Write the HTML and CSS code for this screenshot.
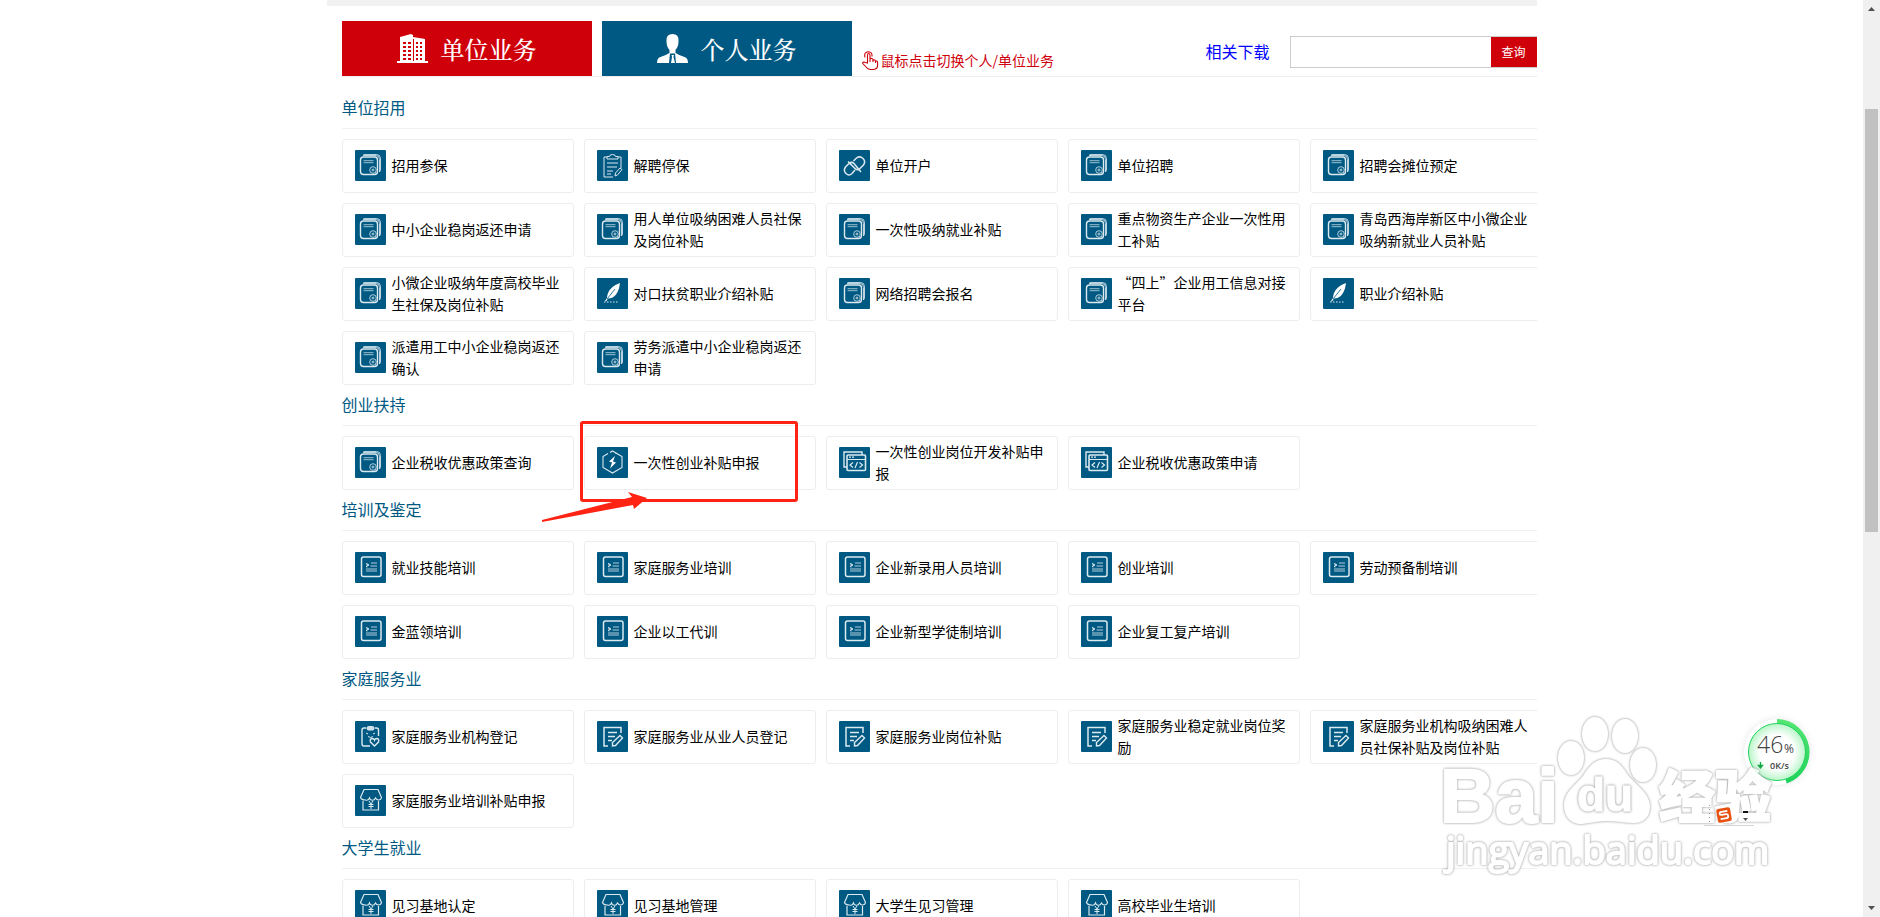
FILE: index.html
```html
<!DOCTYPE html>
<html lang="zh-CN">
<head>
<meta charset="utf-8">
<title>单位业务</title>
<link rel="stylesheet" href="styles.css">
</head>
<body>
<svg class="sprite" aria-hidden="true">
  <symbol id="i-book" viewBox="0 0 31 31"><rect x="5.500" y="7" width="17" height="17.500" rx="3" stroke-width="1.400"/><path d="M8 5.500h13q3.500 0 3.500 4V22M8.500 4.500h13q4 0 4 4V20l-1 2" opacity=".85"/><path d="M8.500 10.700h10M8.500 12.700h10" opacity=".7"/><circle cx="18" cy="20" r="3.300" opacity=".8"/><circle cx="18" cy="20" r="1" opacity=".8"/><path d="M20 22.500l2 1.500" opacity=".7"/></symbol>
  <symbol id="i-clip" viewBox="0 0 31 31"><path d="M10 7H7v20h9M21 7h3v11M10 9V6.500h2.500q0-2 3-2t3 2H21V9z"/><path d="M10 13h11M10 17h10M10 21h6M18 26l.5-3 4.500-5 2 1.500-4.500 5.500zM10 24h4"/></symbol>
  <symbol id="i-link" viewBox="0 0 31 31"><path d="M14.500 11 17.500 8q3.500-2.500 6.500.5t.5 6.500l-4 4q-2.500 2-5-1L9 11.500M16 20l-3 3.500q-3 3-6 0t-.5-6.500l4-4q2.500-1.500 4.500.5l7 8.500" stroke-width="1.500"/></symbol>
  <symbol id="i-quill" viewBox="0 0 31 31"><path d="M23 5q-9 3-12 10-1 3-1 5l-2 3 1 .5 2-3q5 0 8-4 2-3 3-6z" fill="#fff" stroke="none"/><path d="M10 21l8-10" stroke="#005983" stroke-width=".8"/><path d="M7 24h14" stroke-dasharray="1.500 1.500"/></symbol>
  <symbol id="i-bolt" viewBox="0 0 31 31"><path d="M13 5.400 15.500 4 25 9.500v11L15.500 26 6 20.500v-11L11 6.500M19 7v-1" stroke-width="1.100"/><path d="M18 9l-6 5.500 3 1-2 6 6-6-3-1z" fill="#fff" stroke="none"/></symbol>
  <symbol id="i-code" viewBox="0 0 31 31"><path d="M8 20H5V5h18v3" stroke-width="1.400"/><rect x="8" y="8" width="18.500" height="15.500" rx="1" stroke-width="1.600"/><path d="M8 12.500h18.500M10 10.200h2M13 10.200h2M14 15.500l-3 2.500 3 2.500M20.500 15.500l3 2.500-3 2.500M18.500 15l-2.500 6" stroke-width="1.200"/></symbol>
  <symbol id="i-list" viewBox="0 0 31 31"><rect x="6.500" y="5" width="19.500" height="19.500" rx="2" stroke-width="1.500"/><path d="M16 11h6M15.500 14h6.500M11 17h11M11 19h11M12 11v4.500M11 11l3 3M14 12l-3 3" opacity=".8"/></symbol>
  <symbol id="i-heart" viewBox="0 0 31 31"><path d="M11 7H9q-2 0-2 2v14q0 2 2 2h6M20 7h1.500q2 0 2 2v6" stroke-width="1.400"/><rect x="12" y="5.500" width="7" height="3.500" rx="1.500" fill="#cfe0e8"/><path d="M11 12l2 1M20 12l-2 1M13 15.500q2.500 2 5 0"/><path d="M19.500 25l-4-4q-1-3 1.500-3.500 2 0 2.500 1.500.5-1.500 2.500-1.500 2.500.5 1.500 3.500z" stroke-width="1.400"/></symbol>
  <symbol id="i-edit" viewBox="0 0 31 31"><path d="M11 25H7V6.500h17V12" stroke-width="1.500"/><path d="M11 11.500h9M11 15.500h7M11 19.500h4" stroke-width="1.400"/><path d="M15.500 25v-3.500l7.500-7 2.500 2.500-7 7.500z" stroke-width="1.400"/></symbol>
  <symbol id="i-shop" viewBox="0 0 31 31"><path d="M9 4.500h14l3.500 8q-.5 2.500-3 2.500-2 0-3-2-1.500 3-4 2-1.500 0-2-2-1.500 3-4 2-4 0-5-2.500zM8 16v9h15.500v-9" stroke-width="1.200"/><path d="M14 16l2 3 2-3M13.500 19.500h5M13.500 21.500h5M16 19v5"/></symbol>
</svg>

<div class="page">
  <main class="wrap">
    <div class="topline"></div>
    <header class="bar">
      <nav class="tabs">
        <button class="tab tab-unit" type="button">
          <svg viewBox="0 0 31 29" width="31" height="29" aria-hidden="true"><path d="M0 27h3V3L14 0l2 1v2l12 2v22h3v2H0z" fill="#fff"/><g fill="#d0000b"><path d="M6 8h3v2H6zM11 8h3v2h-3zM6 12h3v2H6zM11 12h3v2h-3zM6 16h3v2H6zM11 16h3v2h-3zM6 20h3v2H6zM11 20h3v2h-3zM6 24h3v2H6zM11 24h3v2h-3zM19 8h2v2h-2zM23 8h2v2h-2zM19 12h2v2h-2zM23 12h2v2h-2zM19 16h2v2h-2zM23 16h2v2h-2zM19 20h2v2h-2zM23 20h2v2h-2zM19 24h2v2h-2zM23 24h2v2h-2zM16 5h1v22h-1z"/></g></svg>
          <span>单位业务</span>
        </button>
        <button class="tab tab-person" type="button">
          <svg viewBox="0 0 31 29" width="31" height="29" aria-hidden="true"><path d="M15.500 0q6.500 0 6 7 0 6-3 9v3q3 2 9 4 3.500 1 3.500 6H0q0-5 3.500-6 6-2 9-4v-3q-3-3-3-9-.5-7 6-7z" fill="#fff"/><path d="M13 19.500h5l1 9.500h-7z" fill="#005983"/><path d="M14.500 21h2.500l-.5 2 1.500 6h-4l1-6z" fill="#fff"/></svg>
          <span>个人业务</span>
        </button>
      </nav>
      <p class="hint">
        <svg viewBox="0 0 17 19" width="17" height="19" fill="none" stroke="#d0000b" stroke-width="1.100" aria-hidden="true"><path d="M5.500 12V4q0-1.500 1.200-1.500T8 4v5l.3-1.500Q11 7 11 9q2.200-.7 2.600 1 2-.3 2 1.500v3q0 4-5 4H9q-3 0-4.500-2L.8 12.500q-.5-1.500 1-1.500z"/><path d="M8 9v2M11 9v2M13.500 10v2M3 6.500Q1.500 1 6.500.7 10.500 1 10 5.500"/></svg>
        <span>鼠标点击切换个人/单位业务</span>
      </p>
      <a class="download" href="#">相关下载</a>
      <form class="search">
        <input type="text" aria-label="查询内容">
        <button type="button">查询</button>
      </form>
    </header>

    <section>
      <h2>单位招用</h2>
      <div class="grid">
        <a class="card" href="#"><svg><use href="#i-book"/></svg><span>招用参保</span></a>
        <a class="card" href="#"><svg><use href="#i-clip"/></svg><span>解聘停保</span></a>
        <a class="card" href="#"><svg><use href="#i-link"/></svg><span>单位开户</span></a>
        <a class="card" href="#"><svg><use href="#i-book"/></svg><span>单位招聘</span></a>
        <a class="card" href="#"><svg><use href="#i-book"/></svg><span>招聘会摊位预定</span></a>
        <a class="card" href="#"><svg><use href="#i-book"/></svg><span>中小企业稳岗返还申请</span></a>
        <a class="card" href="#"><svg><use href="#i-book"/></svg><span>用人单位吸纳困难人员社保及岗位补贴</span></a>
        <a class="card" href="#"><svg><use href="#i-book"/></svg><span>一次性吸纳就业补贴</span></a>
        <a class="card" href="#"><svg><use href="#i-book"/></svg><span>重点物资生产企业一次性用工补贴</span></a>
        <a class="card" href="#"><svg><use href="#i-book"/></svg><span>青岛西海岸新区中小微企业吸纳新就业人员补贴</span></a>
        <a class="card" href="#"><svg><use href="#i-book"/></svg><span>小微企业吸纳年度高校毕业生社保及岗位补贴</span></a>
        <a class="card" href="#"><svg><use href="#i-quill"/></svg><span>对口扶贫职业介绍补贴</span></a>
        <a class="card" href="#"><svg><use href="#i-book"/></svg><span>网络招聘会报名</span></a>
        <a class="card" href="#"><svg><use href="#i-book"/></svg><span>“四上”企业用工信息对接平台</span></a>
        <a class="card" href="#"><svg><use href="#i-quill"/></svg><span>职业介绍补贴</span></a>
        <a class="card" href="#"><svg><use href="#i-book"/></svg><span>派遣用工中小企业稳岗返还确认</span></a>
        <a class="card" href="#"><svg><use href="#i-book"/></svg><span>劳务派遣中小企业稳岗返还申请</span></a>
      </div>
    </section>

    <section>
      <h2>创业扶持</h2>
      <div class="grid">
        <a class="card" href="#"><svg><use href="#i-book"/></svg><span>企业税收优惠政策查询</span></a>
        <a class="card" href="#"><svg><use href="#i-bolt"/></svg><span>一次性创业补贴申报</span>
          <i class="mark"></i>
          <svg class="arrow" viewBox="0 0 105 32" aria-hidden="true"><path d="M0 31v-2L90 6 86 1l19 6-13 11-1-4z" fill="#ff2314"/></svg>
        </a>
        <a class="card" href="#"><svg><use href="#i-code"/></svg><span>一次性创业岗位开发补贴申报</span></a>
        <a class="card" href="#"><svg><use href="#i-code"/></svg><span>企业税收优惠政策申请</span></a>
      </div>
    </section>

    <section>
      <h2>培训及鉴定</h2>
      <div class="grid">
        <a class="card" href="#"><svg><use href="#i-list"/></svg><span>就业技能培训</span></a>
        <a class="card" href="#"><svg><use href="#i-list"/></svg><span>家庭服务业培训</span></a>
        <a class="card" href="#"><svg><use href="#i-list"/></svg><span>企业新录用人员培训</span></a>
        <a class="card" href="#"><svg><use href="#i-list"/></svg><span>创业培训</span></a>
        <a class="card" href="#"><svg><use href="#i-list"/></svg><span>劳动预备制培训</span></a>
        <a class="card" href="#"><svg><use href="#i-list"/></svg><span>金蓝领培训</span></a>
        <a class="card" href="#"><svg><use href="#i-list"/></svg><span>企业以工代训</span></a>
        <a class="card" href="#"><svg><use href="#i-list"/></svg><span>企业新型学徒制培训</span></a>
        <a class="card" href="#"><svg><use href="#i-list"/></svg><span>企业复工复产培训</span></a>
      </div>
    </section>

    <section>
      <h2>家庭服务业</h2>
      <div class="grid">
        <a class="card" href="#"><svg><use href="#i-heart"/></svg><span>家庭服务业机构登记</span></a>
        <a class="card" href="#"><svg><use href="#i-edit"/></svg><span>家庭服务业从业人员登记</span></a>
        <a class="card" href="#"><svg><use href="#i-edit"/></svg><span>家庭服务业岗位补贴</span></a>
        <a class="card" href="#"><svg><use href="#i-edit"/></svg><span>家庭服务业稳定就业岗位奖励</span></a>
        <a class="card" href="#"><svg><use href="#i-edit"/></svg><span>家庭服务业机构吸纳困难人员社保补贴及岗位补贴</span></a>
        <a class="card" href="#"><svg><use href="#i-shop"/></svg><span>家庭服务业培训补贴申报</span></a>
      </div>
    </section>

    <section>
      <h2>大学生就业</h2>
      <div class="grid">
        <a class="card" href="#"><svg><use href="#i-shop"/></svg><span>见习基地认定</span></a>
        <a class="card" href="#"><svg><use href="#i-shop"/></svg><span>见习基地管理</span></a>
        <a class="card" href="#"><svg><use href="#i-shop"/></svg><span>大学生见习管理</span></a>
        <a class="card" href="#"><svg><use href="#i-shop"/></svg><span>高校毕业生培训</span></a>
      </div>
    </section>
  </main>
</div>

<div class="scroll" aria-hidden="true">
  <svg viewBox="0 0 17 17" width="17" height="17"><path d="M5 11l3.500-4L12 11z" fill="#505050"/></svg>
  <div class="track"><div class="before"></div><div class="thumb"></div><div class="after"></div></div>
  <svg viewBox="0 0 17 17" width="17" height="17"><path d="M5 6l3.500 4L12 6z" fill="#505050"/></svg>
</div>

<svg class="ball" viewBox="0 0 84 84" role="img" aria-label="46%">
  <defs>
    <radialGradient id="halo"><stop offset=".75" stop-color="#e8e8e8"/><stop offset=".84" stop-color="#f8f8f8"/><stop offset="1" stop-color="#fff" stop-opacity="0"/></radialGradient>
    <radialGradient id="core"><stop offset=".6" stop-color="#fff"/><stop offset="1" stop-color="#b9f5c9"/></radialGradient>
    <linearGradient id="arc" x2="0" y2="1"><stop offset="0" stop-color="#55e573"/><stop offset="1" stop-color="#1fd35c"/></linearGradient>
  </defs>
  <circle cx="42" cy="42" r="41" fill="url(#halo)"/>
  <circle cx="42" cy="42" r="33" fill="#fff"/>
  <path d="M42 11.500A30.500 30.500 0 0 1 51 71" fill="none" stroke="url(#arc)" stroke-width="5"/>
  <circle cx="42" cy="42" r="28.500" fill="url(#core)" stroke="#1fd35c"/>
  <text x="22" y="43" class="ball-num">46</text>
  <text x="49" y="43" class="ball-pct">%</text>
  <path d="M25.500 52v6M23.500 55.500l2 2.500 2-2.500z" stroke="#13a845" stroke-width="1.300" fill="#13a845"/>
  <text x="35" y="59" class="ball-rate">0K/s</text>
</svg>

<svg class="watermark" viewBox="0 0 350 172" aria-hidden="true">
  <g class="wm-body">
    <text x="0" y="112" class="wm-bai">Bai</text>
    <ellipse cx="131" cy="48" rx="12" ry="16"/><ellipse cx="155" cy="24" rx="12" ry="16"/><ellipse cx="185" cy="26" rx="12" ry="16"/><ellipse cx="203" cy="55" rx="12" ry="16"/>
    <path d="M166 50c12 0 16 8 22 17 8 9 21 17 21 30 0 10-7 15-15 15-10 0-16-2-28-2s-18 3-27 3c-9-1-14-8-14-18 0-13 12-19 19-29 6-9 11-16 22-16z"/>
    <text x="219" y="107" class="wm-han">经验</text>
    <text x="6" y="154" class="wm-url">jingyan.baidu.com</text>
  </g>
  <text x="137" y="101" class="wm-du">du</text>
</svg>

<svg class="ime" viewBox="0 0 50 24" aria-hidden="true">
  <path d="M0 21.500h50" stroke="#d5d5d5"/>
  <path d="M5.500 1v20" stroke="#999" stroke-dasharray="1 3"/>
  <g transform="rotate(-10 20 11)"><rect x="13" y="4" width="14" height="14" rx="2" fill="#e8500f"/><path d="M24 7.500h-6q-2 0-2 1.500t2 1.500h4q2 0 2 2t-2 2h-6" fill="none" stroke="#fff" stroke-width="1.800"/></g>
  <path d="M39 7h5v2h-5z" fill="#111"/><path d="M39 14h5l-2.500 3z" fill="#555"/>
</svg>
</body>
</html>
```
FILE: styles.css
```css
* { box-sizing: border-box; }

body {
  margin: 0;
  height: 100vh;
  display: flex;
  overflow: hidden;
  background: #fff;
  color: #000;
  font: 14px/22px "Noto Sans CJK SC", sans-serif;
}

a { text-decoration: none; }

.sprite { display: none; }

.page { flex: 1; min-width: 0; overflow: hidden; }

.wrap {
  max-width: 1210px;
  margin: 0 auto;
  padding-left: 15px;
  overflow: hidden;
}

.topline { height: 6px; margin-left: -15px; background: #f1f1f1; }

.bar {
  display: flex;
  align-items: flex-end;
  margin-top: 15px;
  border-bottom: 1px solid #ededed;
}

.tabs { display: flex; gap: 10px; }

.tab {
  display: flex;
  align-items: center;
  justify-content: center;
  gap: 13px;
  width: 250px;
  height: 55px;
  padding: 0;
  border: 0;
  color: #fff;
  font: 500 24px/30px "Noto Serif CJK SC", "Noto Sans CJK SC", serif;
}

.tab-unit { background: #d0000b; }
.tab-person { background: #005983; }

.hint {
  display: flex;
  align-items: center;
  gap: 2px;
  margin: 0 auto 5px 10px;
  color: #d0000b;
}

.download { margin-bottom: 14px; color: #00f; font-size: 16px; }

.search { display: flex; margin: 0 0 8px 20px; }

.search input {
  width: 201px;
  height: 32px;
  padding: 0 8px;
  border: 1px solid #ccc;
  border-right: 0;
}

.search button {
  width: 46px;
  height: 32px;
  padding: 0;
  border: solid #ccc;
  border-width: 1px 0;
  background: #d0000b;
  color: #fff;
  font: 12px/16px "Noto Sans CJK SC", sans-serif;
}

h2 {
  height: 41px;
  margin: 0 0 10px;
  padding-top: 8px;
  border-bottom: 1px solid #f0f0f0;
  color: #005983;
  font-size: 16px;
  font-weight: 400;
  line-height: 22px;
}

.bar + section { margin-top: 11px; }

.grid {
  display: grid;
  grid-template-columns: repeat(5, 1fr);
  gap: 10px;
  margin-right: -5px;
}

.card {
  position: relative;
  display: flex;
  align-items: center;
  gap: 6px;
  height: 54px;
  padding: 0 10px 2px 12px;
  border: 1px solid #ededed;
  border-radius: 3px;
  color: #000;
}

.card > svg {
  flex: none;
  width: 31px;
  height: 31px;
  border-radius: 1px;
  background: #005983;
  fill: none;
  stroke: #dce9ef;
}

.mark {
  position: absolute;
  left: -5px;
  top: -16px;
  width: 218px;
  height: 81px;
  border: 3px solid #ff2314;
  border-radius: 3px;
}

.card > .arrow {
  position: absolute;
  left: -43px;
  top: 54px;
  width: 105px;
  height: 32px;
  background: none;
  stroke: none;
}

.scroll { display: flex; flex-direction: column; width: 17px; background: #f0f0f0; }
.track { flex: 1; display: flex; flex-direction: column; padding: 0 2px; }
.before { flex: 92; }
.thumb { flex: 423; background: #c1c1c1; }
.after { flex: 368; }

.ball { position: absolute; right: 61px; bottom: 123px; width: 84px; height: 84px; }
.ball text { fill: #444; font-family: "Open Sans", sans-serif; }
.ball .ball-num { font-size: 23px; font-weight: 300; }
.ball .ball-pct { font-size: 12px; }
.ball .ball-rate { font-size: 9px; font-weight: 600; }

.ime { position: absolute; right: 126px; bottom: 89px; width: 50px; height: 24px; }

.watermark { position: absolute; right: 90px; bottom: 35px; width: 350px; height: 172px; }
.wm-body {
  fill: #fff;
  stroke: #fff;
  stroke-width: 2;
  stroke-linejoin: round;
  opacity: .8;
  filter: drop-shadow(0 0 1px #999) drop-shadow(0 0 1px #ccc);
}
.wm-bai { font: 700 76px "Liberation Sans", sans-serif; }
.wm-han { font: 900 56px "Noto Sans CJK SC", sans-serif; }
.wm-url { font: 400 38px "Open Sans", sans-serif; }
.wm-du {
  fill: #fff;
  stroke: #fff;
  font: 700 46px "Liberation Sans", sans-serif;
  filter: drop-shadow(0 0 1px #aaa) drop-shadow(0 0 1px #ccc);
}
```
